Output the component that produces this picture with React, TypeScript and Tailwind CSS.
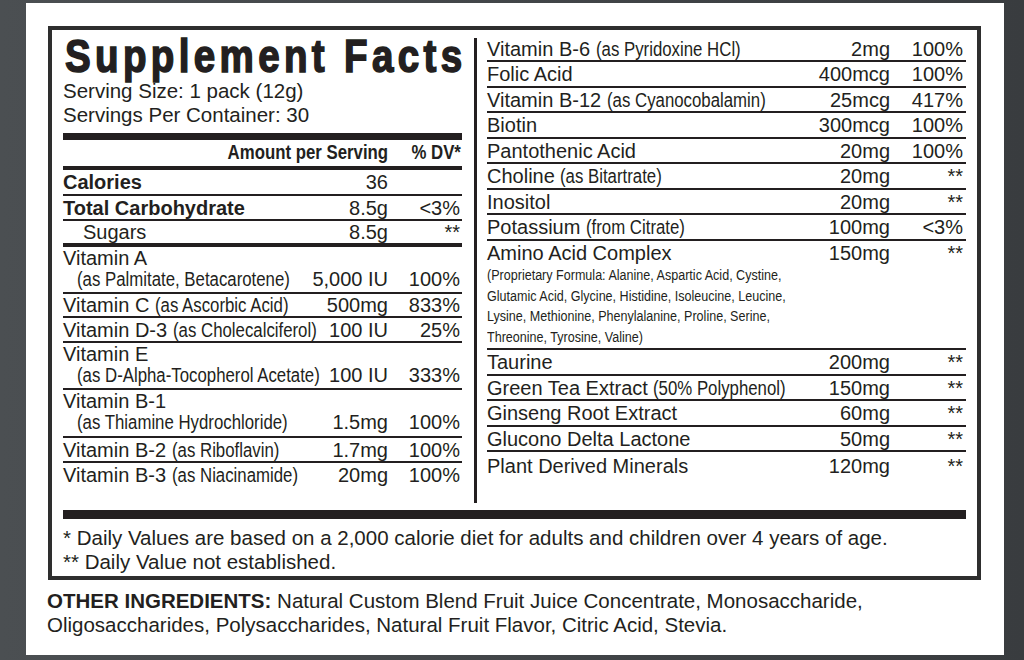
import type { ReactNode } from 'react';

// narrow type, as on the printed label
function N({ children, right }: { children: ReactNode; right?: boolean }) {
  return (
    <span className={`inline-block scale-x-[0.84] ${right ? 'origin-right' : 'origin-left'}`}>{children}</span>
  );
}

type Row = {
  name: ReactNode;
  sub?: ReactNode;
  amt: string;
  dv: string;
  h: string;
  line: string;
};

const leftRows: Row[] = [
  { name: <b>Calories</b>, amt: '36', dv: '', h: 'h-[26px]', line: 'border-b-2' },
  { name: <b>Total Carbohydrate</b>, amt: '8.5g', dv: '<3%', h: 'h-[25px]', line: 'border-b-2' },
  { name: <span className="pl-[20px]">Sugars</span>, amt: '8.5g', dv: '**', h: 'h-[26px]', line: 'border-b-4' },
  { name: 'Vitamin A', sub: '(as Palmitate, Betacarotene)', amt: '5,000 IU', dv: '100%', h: 'h-[47px]', line: 'border-b-2' },
  { name: <>Vitamin C <N>(as Ascorbic Acid)</N></>, amt: '500mg', dv: '833%', h: 'h-[24px]', line: 'border-b-2' },
  { name: <>Vitamin D-3 <N>(as Cholecalciferol)</N></>, amt: '100 IU', dv: '25%', h: 'h-[25px]', line: 'border-b-2' },
  { name: 'Vitamin E', sub: '(as D-Alpha-Tocopherol Acetate)', amt: '100 IU', dv: '333%', h: 'h-[47px]', line: 'border-b-2' },
  { name: 'Vitamin B-1', sub: '(as Thiamine Hydrochloride)', amt: '1.5mg', dv: '100%', h: 'h-[48px]', line: 'border-b-2' },
  { name: <>Vitamin B-2 <N>(as Riboflavin)</N></>, amt: '1.7mg', dv: '100%', h: 'h-[25px]', line: 'border-b-2' },
  { name: <>Vitamin B-3 <N>(as Niacinamide)</N></>, amt: '20mg', dv: '100%', h: 'h-[24px]', line: '' },
];

const rightTop: Row[] = [
  { name: <>Vitamin B-6 <N>(as Pyridoxine HCl)</N></>, amt: '2mg', dv: '100%', h: 'h-[25px]', line: 'border-b-2' },
  { name: 'Folic Acid', amt: '400mcg', dv: '100%', h: 'h-[26px]', line: 'border-b-2' },
  { name: <>Vitamin B-12 <N>(as Cyanocobalamin)</N></>, amt: '25mcg', dv: '417%', h: 'h-[25px]', line: 'border-b-2' },
  { name: 'Biotin', amt: '300mcg', dv: '100%', h: 'h-[26px]', line: 'border-b-2' },
  { name: 'Pantothenic Acid', amt: '20mg', dv: '100%', h: 'h-[25px]', line: 'border-b-2' },
  { name: <>Choline <N>(as Bitartrate)</N></>, amt: '20mg', dv: '**', h: 'h-[26px]', line: 'border-b-2' },
  { name: 'Inositol', amt: '20mg', dv: '**', h: 'h-[25px]', line: 'border-b-2' },
  { name: <>Potassium <N>(from Citrate)</N></>, amt: '100mg', dv: '<3%', h: 'h-[26px]', line: 'border-b-2' },
];

const rightBottom: Row[] = [
  { name: 'Taurine', amt: '200mg', dv: '**', h: 'h-[26px]', line: 'border-b-2' },
  { name: <>Green Tea Extract <N>(50% Polyphenol)</N></>, amt: '150mg', dv: '**', h: 'h-[25px]', line: 'border-b-2' },
  { name: 'Ginseng Root Extract', amt: '60mg', dv: '**', h: 'h-[26px]', line: 'border-b-2' },
  { name: 'Glucono Delta Lactone', amt: '50mg', dv: '**', h: 'h-[25px]', line: 'border-b-2' },
  { name: 'Plant Derived Minerals', amt: '120mg', dv: '**', h: 'h-[27px]', line: '' },
];

const amino = [
  '(Proprietary Formula: Alanine, Aspartic Acid, Cystine,',
  'Glutamic Acid, Glycine, Histidine, Isoleucine, Leucine,',
  'Lysine, Methionine, Phenylalanine, Proline, Serine,',
  'Threonine, Tyrosine, Valine)',
];

function FactRow({ row, amtW, dvW }: { row: Row; amtW: string; dvW: string }) {
  const cells = (
    <>
      <div className={`${amtW} shrink-0 text-right`}>{row.amt}</div>
      <div className={`${dvW} shrink-0 text-right`}>{row.dv}</div>
    </>
  );
  if (row.sub) {
    return (
      <div className={`${row.h} ${row.line} border-[#231f20] pt-[1px] flex flex-col`}>
        <div className="leading-[21px] whitespace-nowrap">{row.name}</div>
        <div className="leading-[21px] flex whitespace-nowrap">
          <div className="flex-1 min-w-0 pl-[14px]">
            <N>{row.sub}</N>
          </div>
          {cells}
        </div>
      </div>
    );
  }
  return (
    <div className={`${row.h} ${row.line} border-[#231f20] flex items-center whitespace-nowrap`}>
      <div className="flex-1 min-w-0">{row.name}</div>
      {cells}
    </div>
  );
}

export default function App() {
  return (
    <div className="w-[1024px] h-[660px] overflow-hidden bg-linear-to-r from-[#4b4f52] to-[#393c3f] pl-[26px] pt-[3px] font-['Liberation_Sans',Arial,sans-serif] text-[#231f20]">
      <div className="w-[978px] h-[652px] bg-white pl-[22px] pt-[23px]">
        <div className="w-[933px] h-[554px] border-4 border-[#2e2e2e] px-[11px] flex flex-col">
          <div className="flex h-[477px]">
            {/* left column */}
            <div className="w-[399px] pt-[2px] flex flex-col text-[20px]">
              <div className="h-[47px] pl-[2px] whitespace-nowrap">
                <span className="inline-block origin-left scale-x-[0.82] text-[47px] leading-[47px] font-bold tracking-[5.3px] [-webkit-text-stroke:1.6px_#231f20]">
                  Supplement Facts
                </span>
              </div>
              <div className="text-[20.5px] leading-[24px]">Serving Size: 1 pack (12g)</div>
              <div className="text-[20.5px] leading-[24px]">Servings Per Container: 30</div>
              <div className="mt-[6px] h-[7px] bg-[#231f20]" />
              <div className="h-[24px] flex items-center font-bold whitespace-nowrap">
                <div className="flex-1 text-right pr-[2px]">
                  <N right>Amount per Serving</N>
                </div>
                <div className="w-[72px] text-right pr-[1px]">
                  <N right>% DV*</N>
                </div>
              </div>
              <div className="mt-[2px] h-[4px] bg-[#231f20]" />
              {leftRows.map((r, i) => (
                <FactRow key={i} row={r} amtW="w-[110px] pr-[2px]" dvW="w-[72px] pr-[2px]" />
              ))}
            </div>

            <div className="ml-[12px] mt-[8px] mb-[4px] w-[3px] bg-[#231f20]" />

            {/* right column */}
            <div className="ml-[10px] w-[479px] pt-[7px] flex flex-col text-[20px]">
              {rightTop.map((r, i) => (
                <FactRow key={i} row={r} amtW="w-[110px]" dvW="w-[76px] pr-[3px]" />
              ))}
              <div className="h-[109px] border-b-2 border-[#231f20] whitespace-nowrap">
                <div className="h-[24px] flex items-center">
                  <div className="flex-1">Amino Acid Complex</div>
                  <div className="w-[110px] text-right">150mg</div>
                  <div className="w-[76px] pr-[3px] text-right">**</div>
                </div>
                {amino.map((t) => (
                  <div key={t} className="text-[15.5px] leading-[20.5px]">
                    <span className="inline-block origin-left scale-x-[0.81]">{t}</span>
                  </div>
                ))}
              </div>
              {rightBottom.map((r, i) => (
                <FactRow key={i} row={r} amtW="w-[110px]" dvW="w-[76px] pr-[3px]" />
              ))}
            </div>
          </div>

          <div className="mt-[3px] h-[9px] bg-[#231f20]" />
          <div className="mt-[7px] text-[20.5px] leading-[24px] whitespace-nowrap">
            <div>* Daily Values are based on a 2,000 calorie diet for adults and children over 4 years of age.</div>
            <div>** Daily Value not established.</div>
          </div>
        </div>

        <div className="mt-[9px] -ml-[1px] text-[20.5px] leading-[24px] whitespace-nowrap">
          <div>
            <b>OTHER INGREDIENTS:</b> Natural Custom Blend Fruit Juice Concentrate, Monosaccharide,
          </div>
          <div>Oligosaccharides, Polysaccharides, Natural Fruit Flavor, Citric Acid, Stevia.</div>
        </div>
      </div>
    </div>
  );
}
